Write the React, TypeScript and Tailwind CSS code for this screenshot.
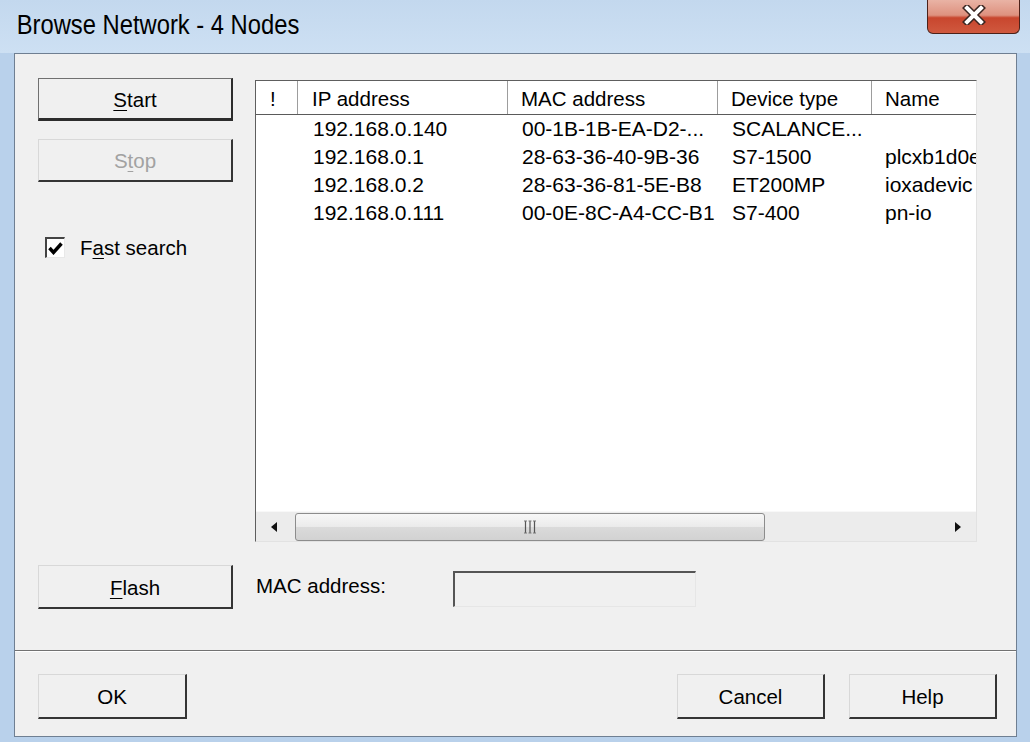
import React from "react"

type BtnProps = {
  children: React.ReactNode
  className?: string
  primary?: boolean
  disabled?: boolean
}

function WinButton({ children, className = "", primary = false, disabled = false }: BtnProps) {
  const edges = primary
    ? "border-t border-l border-r-2 border-b-[3px] border-t-[#707070] border-l-[#707070] border-r-[#2c2c2c] border-b-[#2c2c2c]"
    : "border-t border-l border-r-2 border-b-2 border-t-[#d8d8d8] border-l-[#d8d8d8] border-r-[#353535] border-b-[#353535]"
  return (
    <button
      type="button"
      className={`flex shrink-0 items-center justify-center bg-[#f0f0f0] pt-[3px] text-[20.5px] leading-none ${edges} ${
        disabled ? "text-[#a2a2a2]" : "text-black"
      } ${className}`}
    >
      {children}
    </button>
  )
}

function Mn({ children }: { children: React.ReactNode }) {
  return <span className="underline decoration-1 underline-offset-[3px]">{children}</span>
}

const rows = [
  { ip: "192.168.0.140", mac: "00-1B-1B-EA-D2-...", type: "SCALANCE...", name: "" },
  { ip: "192.168.0.1", mac: "28-63-36-40-9B-36", type: "S7-1500", name: "plcxb1d0e" },
  { ip: "192.168.0.2", mac: "28-63-36-81-5E-B8", type: "ET200MP", name: "ioxadevic" },
  { ip: "192.168.0.111", mac: "00-0E-8C-A4-CC-B1", type: "S7-400", name: "pn-io" },
]

function CloseButton() {
  return (
    <div className="mr-[10px] flex h-[34px] w-[93px] items-center justify-center rounded-b-[6px] border-r border-b border-l border-[#4b2119] bg-[linear-gradient(to_bottom,#e9b3a5_0%,#de917f_46%,#c8462e_54%,#d0593f_100%)] pb-[3px]">
      <svg width="24" height="20" viewBox="0 0 24 20">
        <path d="M5 3 L19 17 M19 3 L5 17" stroke="#3b2520" strokeWidth="7" strokeLinecap="square" />
        <path d="M5 3 L19 17 M19 3 L5 17" stroke="#ffffff" strokeWidth="4" strokeLinecap="square" />
      </svg>
    </div>
  )
}

function Scrollbar() {
  return (
    <div className="flex h-[30px] shrink-0 items-center border-t border-t-[#f8f8f8] bg-[#ececec]">
      <div className="flex w-[39px] shrink-0 items-center justify-center pr-[4px]">
        <svg width="6" height="10" viewBox="0 0 6 10">
          <path d="M6 0 L0 5 L6 10 Z" fill="#111" />
        </svg>
      </div>
      <div className="flex h-[28px] w-[470px] shrink-0 items-center justify-center rounded-[3px] border border-[#8c8c8c] bg-[linear-gradient(to_bottom,#f7f7f7_0%,#ebebeb_48%,#dadada_52%,#d2d2d2_100%)]">
        <svg width="14" height="14" viewBox="0 0 14 14">
          <path d="M2.5 1 V13 M7 1 V13 M11.5 1 V13" stroke="#555" strokeWidth="1.2" />
          <path d="M1 1 H4 M5.5 1 H8.5 M10 1 H13 M1 13 H4 M5.5 13 H8.5 M10 13 H13" stroke="#777" strokeWidth="1" />
        </svg>
      </div>
      <div className="flex-1" />
      <div className="flex w-[36px] shrink-0 items-center justify-center">
        <svg width="6" height="10" viewBox="0 0 6 10">
          <path d="M0 0 L6 5 L0 10 Z" fill="#111" />
        </svg>
      </div>
    </div>
  )
}

function DeviceList() {
  return (
    <div className="ml-[22px] mt-[2px] flex h-[462px] w-[722px] flex-col overflow-hidden border-t border-l border-r border-b border-t-[#5e5e5e] border-l-[#5e5e5e] border-r-[#e2e2e2] border-b-[#e2e2e2] bg-white">
      <div className="flex h-[34px] shrink-0 border-b border-b-[#5a5a5a] text-[20.5px] text-black">
        <div className="flex w-[42px] shrink-0 items-center border-r border-r-[#9d9d9d] pl-[14px] pt-[3px]">!</div>
        <div className="flex w-[210px] shrink-0 items-center border-r border-r-[#9d9d9d] pl-[14px] pt-[3px]">IP address</div>
        <div className="flex w-[210px] shrink-0 items-center border-r border-r-[#9d9d9d] pl-[13px] pt-[3px]">MAC address</div>
        <div className="flex w-[154px] shrink-0 items-center border-r border-r-[#9d9d9d] pl-[13px] pt-[3px]">Device type</div>
        <div className="flex w-[200px] shrink-0 items-center pl-[13px] pt-[3px]">Name</div>
      </div>
      <div className="flex-1 text-[21px] text-black">
        {rows.map((r) => (
          <div key={r.ip} className="flex h-[28px] items-center whitespace-nowrap">
            <div className="w-[42px] shrink-0" />
            <div className="w-[210px] shrink-0 pl-[15px]">{r.ip}</div>
            <div className="w-[210px] shrink-0 pl-[14px]">{r.mac}</div>
            <div className="w-[154px] shrink-0 pl-[14px]">{r.type}</div>
            <div className="w-[200px] shrink-0 pl-[13px]">{r.name}</div>
          </div>
        ))}
      </div>
      <Scrollbar />
    </div>
  )
}

export default function App() {
  return (
    <div className="flex h-[742px] w-[1030px] flex-col overflow-hidden bg-[#b9d1eb] font-['Liberation_Sans',Arial,sans-serif] text-black">
      {/* title bar */}
      <div className="flex h-[53px] shrink-0 items-start justify-between bg-[linear-gradient(to_bottom,#c3d8ee,#cde0f3)]">
        <div className="origin-left scale-x-[0.88] pl-[19px] pt-[12px] text-[27px] leading-[27px] whitespace-nowrap">
          Browse Network - 4 Nodes
        </div>
        <CloseButton />
      </div>

      {/* client area */}
      <div className="ml-[14px] flex h-[684px] w-[1003px] shrink-0 flex-col border border-[#6f7f92] bg-[#f0f0f0]">
        <div className="flex pl-[23px] pt-[24px]">
          <div className="flex w-[195px] shrink-0 flex-col">
            <WinButton primary className="h-[43px] w-[195px]">
              <Mn>S</Mn>tart
            </WinButton>
            <WinButton disabled className="mt-[18px] h-[43px] w-[195px]">
              S<Mn>t</Mn>op
            </WinButton>
            <div className="mt-[55px] flex h-[21px] items-center pl-[7px]">
              <div className="flex h-[21px] w-[20px] items-center justify-center border-t-2 border-l-2 border-r border-b border-t-[#444] border-l-[#444] border-r-[#e8e8e8] border-b-[#e8e8e8] bg-white">
                <svg width="15" height="13" viewBox="0 0 15 13">
                  <path d="M1.5 6 L5.5 10.5 L13.5 1.5" fill="none" stroke="#000" strokeWidth="3.4" />
                </svg>
              </div>
              <span className="ml-[15px] pt-[2px] text-[20.5px] leading-none">
                F<Mn>a</Mn>st search
              </span>
            </div>
          </div>
          <DeviceList />
        </div>

        <div className="mt-[23px] flex items-start pl-[23px]">
          <WinButton className="h-[44px] w-[195px]">
            <Mn>F</Mn>lash
          </WinButton>
          <div className="ml-[23px] mt-[9px] w-[197px] text-[20.5px] leading-[24px]">MAC address:</div>
          <div className="mt-[6px] h-[36px] w-[243px] border-t-2 border-l-2 border-r border-b border-t-[#555] border-l-[#555] border-r-[#e6e6e6] border-b-[#e6e6e6] bg-[#f0f0f0]" />
        </div>

        <div className="mt-[41px] h-[2px] border-t border-b border-t-[#727272] border-b-white" />

        <div className="mt-[22px] flex justify-between pl-[23px] pr-[19px]">
          <WinButton className="h-[45px] w-[149px]">OK</WinButton>
          <div className="flex gap-[24px]">
            <WinButton className="h-[45px] w-[148px]">Cancel</WinButton>
            <WinButton className="h-[45px] w-[148px]">Help</WinButton>
          </div>
        </div>
      </div>
    </div>
  )
}
